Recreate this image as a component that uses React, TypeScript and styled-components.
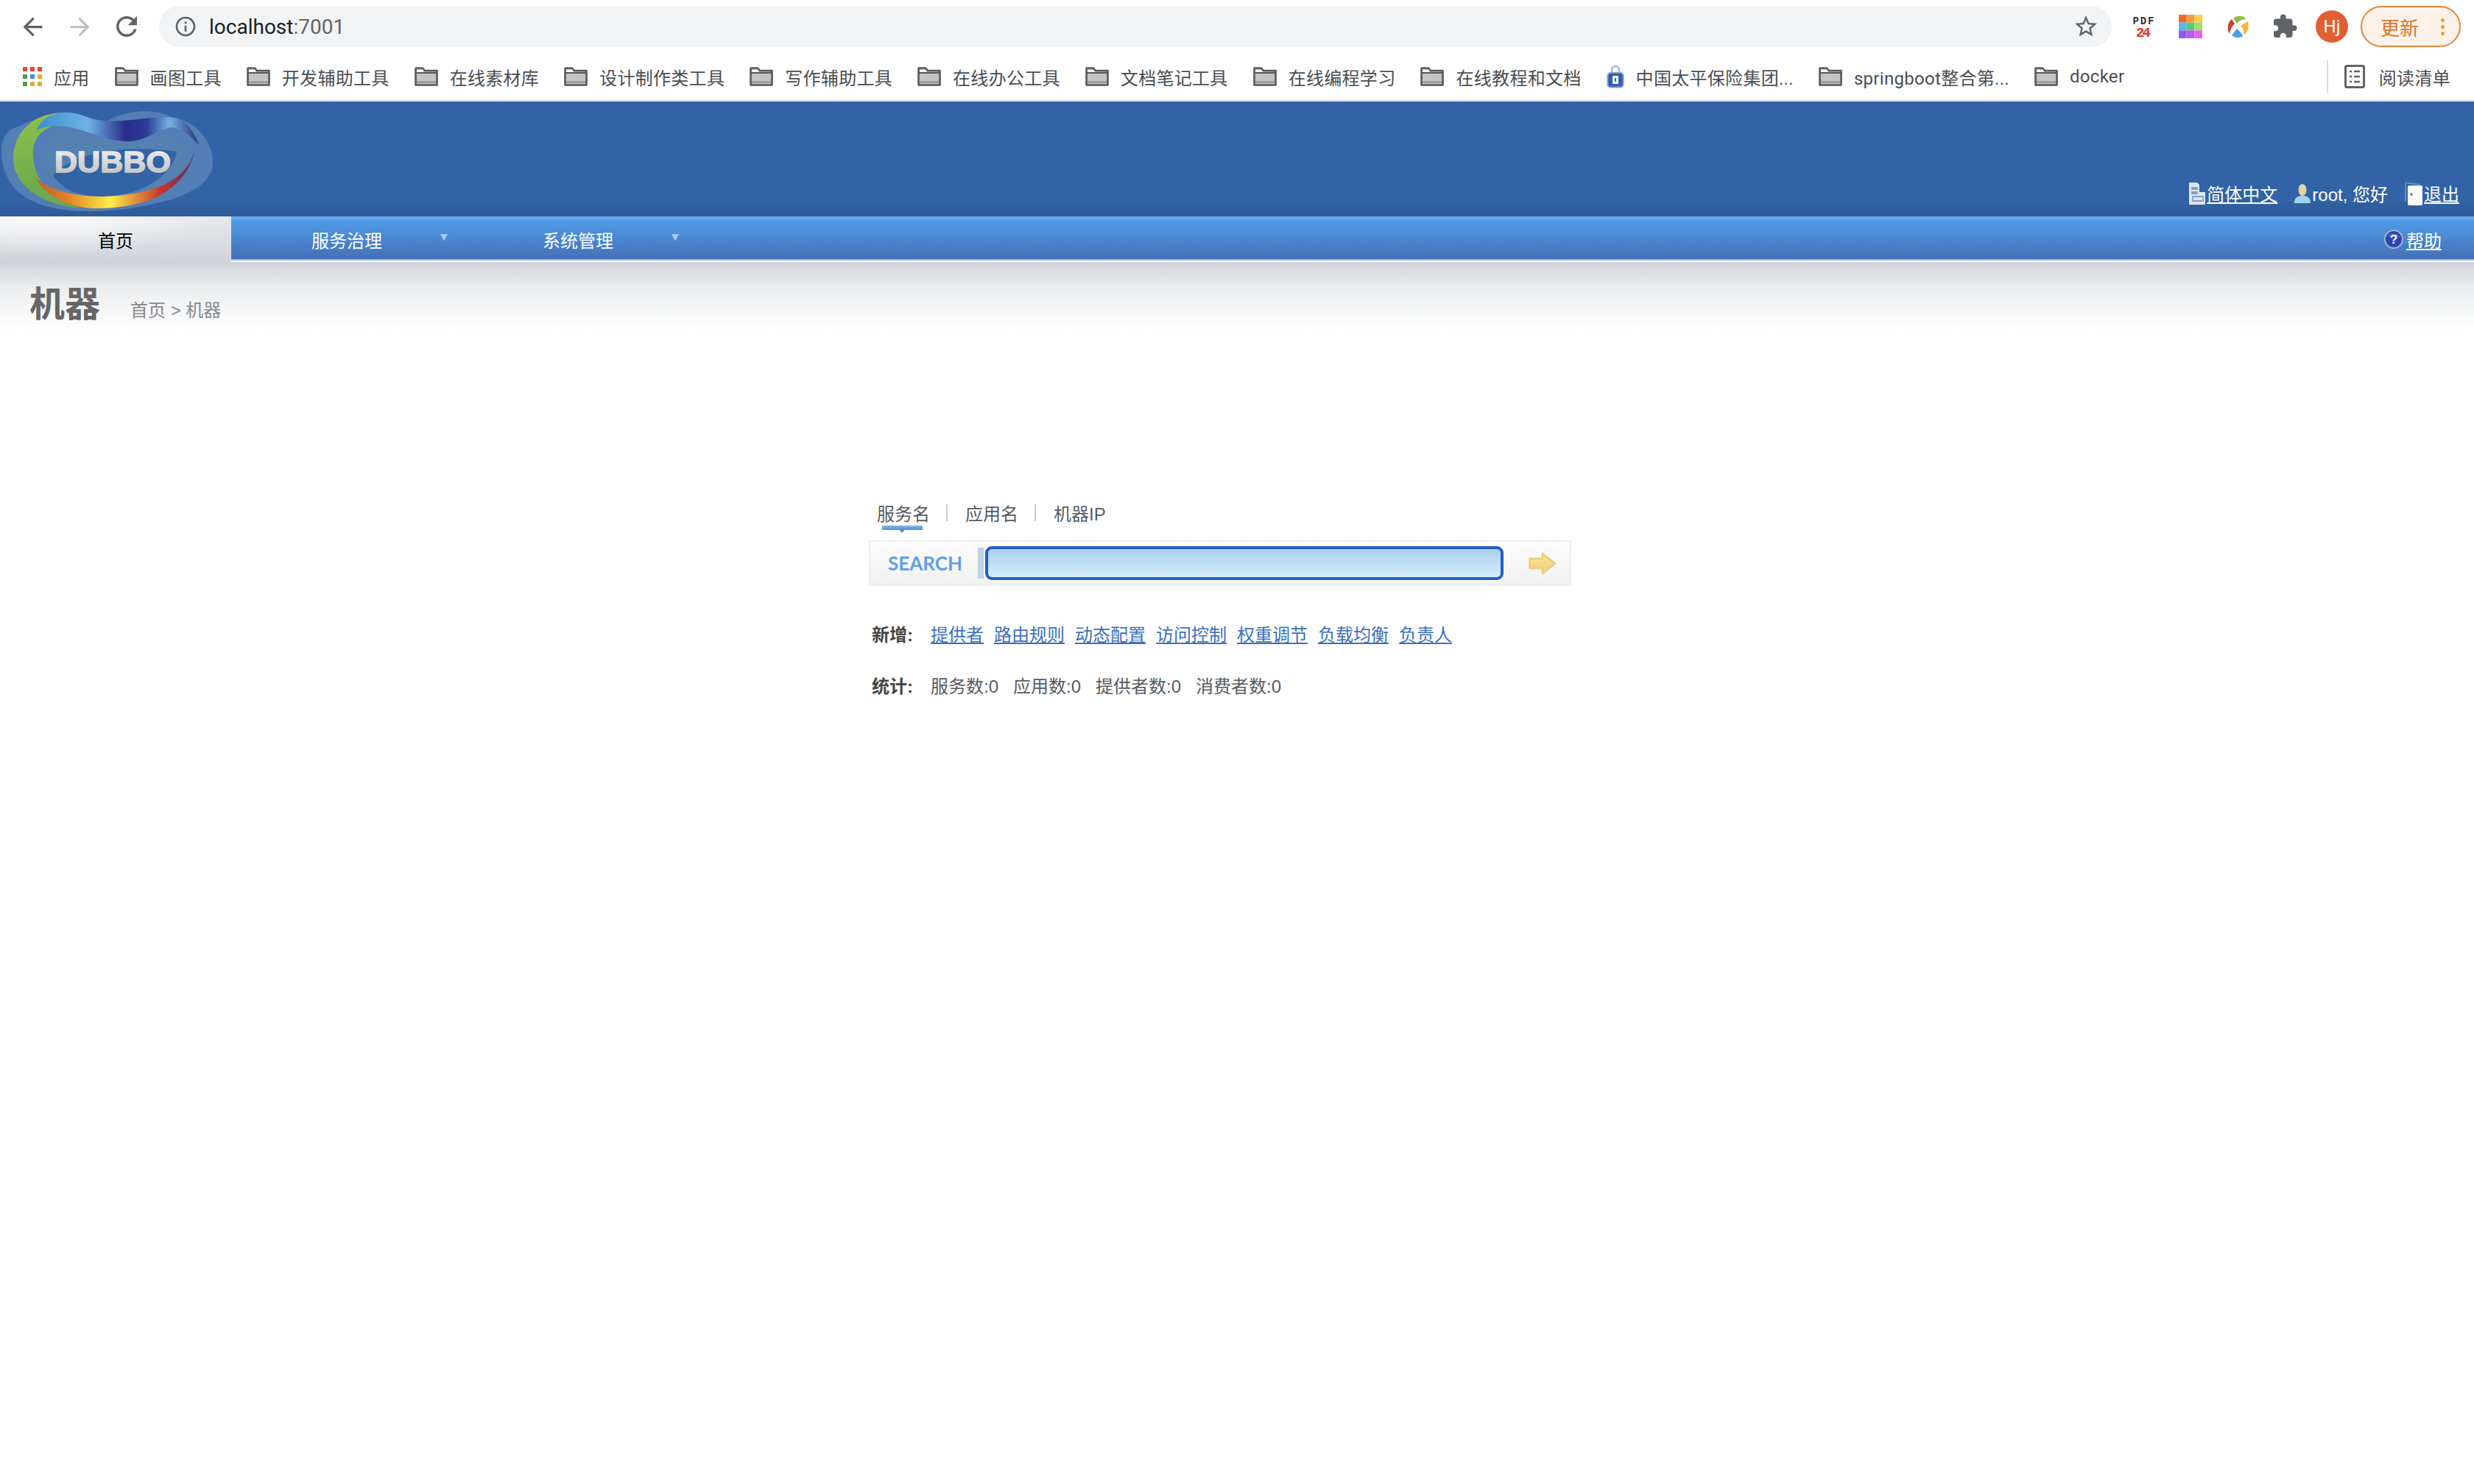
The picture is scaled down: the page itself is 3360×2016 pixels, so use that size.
import styled, { createGlobalStyle } from 'styled-components';
import {
    MdArrowBack,
    MdArrowForward,
    MdExtension,
    MdInfoOutline,
    MdRefresh,
    MdStarBorder,
} from 'react-icons/md';

const GlobalStyle = createGlobalStyle`
    html, body {
        margin: 0;
        padding: 0;
        background: #fff;
    }
    body {
        font-family: 'Liberation Sans', 'Noto Sans CJK SC', sans-serif;
        font-size: 24px;
    }
`;

const bookmarks = [
    '画图工具',
    '开发辅助工具',
    '在线素材库',
    '设计制作类工具',
    '写作辅助工具',
    '在线办公工具',
    '文档笔记工具',
    '在线编程学习',
    '在线教程和文档',
];

const addLinks = ['提供者', '路由规则', '动态配置', '访问控制', '权重调节', '负载均衡', '负责人'];
const stats = ['服务数:0', '应用数:0', '提供者数:0', '消费者数:0'];

const FolderIcon = () => (
    <svg width='32' height='26' viewBox='0 0 32 26'>
        <path
            d='M2 1.5h9l3 3.5h16.500v19.500H1.500V2z'
            fill='#c4c4c4'
            stroke='#55585c'
            strokeWidth='2.6'
            strokeLinejoin='round'
        />
        <path d='M1.500 8h29' stroke='#55585c' strokeWidth='2' />
        <path d='M3 5.500h9' stroke='#fff' strokeWidth='3' />
        <path d='M3 20.500h26' stroke='#8b8d90' strokeWidth='2' />
    </svg>
);

const AppsIcon = () => (
    <svg width='26' height='26' viewBox='0 0 26 26'>
        <rect x='0' y='0' width='6' height='6' fill='#e0453a' />
        <rect x='10' y='0' width='6' height='6' fill='#e0453a' />
        <rect x='20' y='0' width='6' height='6' fill='#e0453a' />
        <rect x='0' y='10' width='6' height='6' fill='#4d9a5b' />
        <rect x='10' y='10' width='6' height='6' fill='#4285f4' />
        <rect x='20' y='10' width='6' height='6' fill='#e8a93a' />
        <rect x='0' y='20' width='6' height='6' fill='#4d9a5b' />
        <rect x='10' y='20' width='6' height='6' fill='#e8a93a' />
        <rect x='20' y='20' width='6' height='6' fill='#e8a93a' />
    </svg>
);

const LockIcon = () => (
    <svg width='24' height='32' viewBox='0 0 24 32'>
        <path d='M7 12V7a5 5 0 0 1 10 0v5' fill='none' stroke='#a9b8d4' strokeWidth='2.500' />
        <rect x='1.500' y='11' width='21' height='19.500' rx='4' fill='#2f5fb0' stroke='#7f9bcc' strokeWidth='2' />
        <rect x='8' y='15' width='8' height='11' rx='1' fill='#fff' />
        <rect x='11' y='18' width='2' height='5' fill='#2f5fb0' />
    </svg>
);

const ReadingIcon = () => (
    <svg width='28' height='32' viewBox='0 0 28 32'>
        <rect x='1.500' y='1.500' width='25' height='29' rx='2' fill='none' stroke='#5f6368' strokeWidth='3' />
        <path d='M7 9h3M13 9h8M7 16h3M13 16h8M7 23h3M13 23h8' stroke='#5f6368' strokeWidth='2.500' />
    </svg>
);

const Pdf24Icon = () => (
    <svg width='30' height='30' viewBox='0 0 30 30'>
        <text x='15' y='12' textAnchor='middle' fontFamily='Liberation Mono, monospace' fontSize='14' fontWeight='700' fill='#333' textLength='29'>
            PDF
        </text>
        <text x='15' y='29' textAnchor='middle' fontFamily='Liberation Mono, monospace' fontSize='19' fontWeight='700' fill='#ee2a24' textLength='20'>
            24
        </text>
    </svg>
);

const PaletteIcon = () => (
    <svg width='32' height='32' viewBox='0 0 3 3'>
        <rect x='0' y='0' width='1' height='1' fill='#f2662e' />
        <rect x='1' y='0' width='1' height='1' fill='#f59b3c' />
        <rect x='2' y='0' width='1' height='1' fill='#fbd04a' />
        <rect x='0' y='1' width='1' height='1' fill='#54b8f2' />
        <rect x='1' y='1' width='1' height='1' fill='#5fcb70' />
        <rect x='2' y='1' width='1' height='1' fill='#98e06c' />
        <rect x='0' y='2' width='1' height='1' fill='#8d5af0' />
        <rect x='1' y='2' width='1' height='1' fill='#b75af0' />
        <rect x='2' y='2' width='1' height='1' fill='#ea62ea' />
    </svg>
);

const RingIcon = () => (
    <svg width='32' height='32' viewBox='0 0 32 32'>
        <path d='M8 6C2 11 1 20 5 26c1-6 3-10 7-14z' fill='#d23b2f' />
        <path d='M10 5c6-5 14-4 18 1-6 0-9 2-13 6z' fill='#8fbf3f' />
        <path d='M30 9c2 7 0 15-6 19 1-6-1-10-4-13z' fill='#f6b73c' />
        <path d='M8 28c5 4 11 4 15 1-2-5-5-7-8-10z' fill='#4a9fe8' />
    </svg>
);

const DubboLogo = () => (
    <LogoSvg width='290' height='142' viewBox='0 0 290 142'>
        <defs>
            <linearGradient id='ribbon' x1='0' x2='1' y1='0' y2='0'>
                <stop offset='0' stopColor='#3a8fce' />
                <stop offset='0.32' stopColor='#6fb2e3' />
                <stop offset='0.55' stopColor='#2a2c88' />
                <stop offset='0.68' stopColor='#2d3c96' />
                <stop offset='0.82' stopColor='#74b2e2' />
                <stop offset='1' stopColor='#27307e' />
            </linearGradient>
            <linearGradient id='band' x1='0' x2='1' y1='0' y2='0'>
                <stop offset='0' stopColor='#b8622e' />
                <stop offset='0.2' stopColor='#e07f24' />
                <stop offset='0.47' stopColor='#fcee48' />
                <stop offset='0.78' stopColor='#c9382a' />
                <stop offset='1' stopColor='#5a2a6e' />
            </linearGradient>
            <linearGradient id='green' x1='0' x2='0' y1='0' y2='1'>
                <stop offset='0' stopColor='#8fc04c' />
                <stop offset='1' stopColor='#66a650' />
            </linearGradient>
            <linearGradient id='silver' x1='0' x2='0' y1='0' y2='1'>
                <stop offset='0' stopColor='#f2f2f2' />
                <stop offset='1' stopColor='#bdbdbd' />
            </linearGradient>
        </defs>
        <path
            d='M2 60C2 36 14 28 28 25 60 4 105 14 135 24 160 8 200-4 235 14c34 4 55 36 54 62-1 34-49 52-119 62-60 7-120 4-150-28C8 95 2 80 2 60z'
            fill='#6f96c2'
            opacity='0.55'
        />
        <path
            d='M60 72C56 45 70 28 95 32c30 8 70 20 120 12 24-4 44 8 44 30 0 30-50 48-110 47C100 120 64 105 60 72z'
            fill='#5581b1'
        />
        <path
            d='M72 92C100 60 170 50 240 60c-6 34-50 60-100 61-34 0-56-10-68-29z'
            fill='#3163a5'
        />
        <path
            d='M84 7C42 8 17 38 18 70c0 32 34 62 90 67L80 120C60 110 47 96 45 66c-2-20 8-36 35-44z'
            fill='url(#green)'
        />
        <path
            d='M47 94c14 26 44 41 78 43 66 1 126-18 140-80-10 38-46 61-125 64-38 0-76-9-93-27z'
            fill='url(#band)'
        />
        <path
            d='M49 31C58 14 68 9 84 7c18-2 30 5 44 9 14 3 32 3 50 1 20-2 42-5 59-3 16 3 26 18 33 37-6-6-18-22-38-24-18 3-34 19-58 19-22 0-36-7-54-12-22-8-48-14-71-3z'
            fill='url(#ribbon)'
        />
        <text
            x='74'
            y='88'
            fontFamily='Liberation Sans, sans-serif'
            fontSize='40'
            fontWeight='700'
            fill='url(#silver)'
            stroke='url(#silver)'
            strokeWidth='1.500'
            textLength='158'
            lengthAdjust='spacingAndGlyphs'
        >
            DUBBO
        </text>
    </LogoSvg>
);

const DocIcon = () => (
    <svg width='22' height='30' viewBox='0 0 22 30'>
        <path d='M0 0h11l3 3v10h8v17H0z' fill='#dce6f2' />
        <path d='M4 7h7v2H4zM4 13h7v2H4zM5 19h14v6H5z' fill='none' stroke='#7f9fc6' strokeWidth='1.800' />
    </svg>
);

const UserIcon = () => (
    <svg width='22' height='28' viewBox='0 0 22 28'>
        <ellipse cx='11' cy='9' rx='5.500' ry='8' fill='#e6d3a0' />
        <path d='M0 27c0-8 5-10 11-10s11 2 11 10z' fill='#9fd4f0' />
    </svg>
);

const DoorIcon = () => (
    <svg width='24' height='34' viewBox='0 0 24 34'>
        <path d='M1 2l20 3' stroke='#5d8fd0' strokeWidth='2' fill='none' />
        <path d='M1 2v26' stroke='#5d8fd0' strokeWidth='2' fill='none' />
        <rect x='4' y='6' width='20' height='27' rx='2' fill='#fff' />
        <circle cx='9' cy='18' r='1.800' fill='#4a7fc0' />
    </svg>
);

const HelpIcon = () => (
    <svg width='26' height='26' viewBox='0 0 26 26'>
        <circle cx='13' cy='13' r='12' fill='#2c46b4' stroke='#a8b2c4' strokeWidth='2' />
        <path d='M5 10a9 8 0 0 1 16 0c-5-2-11-2-16 0z' fill='#5a78d8' />
        <text x='13' y='19' textAnchor='middle' fontFamily='Liberation Sans, sans-serif' fontSize='17' fontWeight='700' fill='#fff'>
            ?
        </text>
    </svg>
);

const GoArrow = () => (
    <svg width='38' height='31' viewBox='0 0 38 31'>
        <defs>
            <linearGradient id='go' x1='0' x2='0' y1='0' y2='1'>
                <stop offset='0' stopColor='#fbe48e' />
                <stop offset='1' stopColor='#f8c886' />
            </linearGradient>
        </defs>
        <path
            d='M1.500 9H19V2l17 13.500L19 29v-7H1.500z'
            fill='url(#go)'
            stroke='#e8cf78'
            strokeWidth='2.500'
            strokeLinejoin='round'
        />
    </svg>
);

const App = () => (
    <>
        <GlobalStyle />
        <BrowserBar>
            <NavButton><MdArrowBack size={39} color='#5f6368' /></NavButton>
            <NavButton><MdArrowForward size={39} color='#bdc1c6' /></NavButton>
            <NavButton><MdRefresh size={42} color='#5f6368' /></NavButton>
            <Omnibox>
                <MdInfoOutline size={32} color='#5f6368' />
                <Url>
                    localhost<UrlPort>:7001</UrlPort>
                </Url>
                <StarSlot><MdStarBorder size={36} color='#5f6368' /></StarSlot>
            </Omnibox>
            <ExtensionSlots>
                <NavButton><Pdf24Icon /></NavButton>
                <NavButton><PaletteIcon /></NavButton>
                <NavButton><RingIcon /></NavButton>
                <NavButton><MdExtension size={36} color='#5f6368' /></NavButton>
                <NavButton><Avatar>Hj</Avatar></NavButton>
            </ExtensionSlots>
            <UpdatePill>
                更新
                <UpdateDots>
                    <i />
                    <i />
                    <i />
                </UpdateDots>
            </UpdatePill>
        </BrowserBar>
        <BookmarkBar>
            <Bookmark><AppsIcon /><BookmarkLabel>应用</BookmarkLabel></Bookmark>
            {bookmarks.map((name) => (
                <Bookmark key={name}><FolderIcon /><BookmarkLabel>{name}</BookmarkLabel></Bookmark>
            ))}
            <Bookmark><LockIcon /><BookmarkLabel>中国太平保险集团...</BookmarkLabel></Bookmark>
            <Bookmark><FolderIcon /><BookmarkLabel>springboot整合第...</BookmarkLabel></Bookmark>
            <Bookmark><FolderIcon /><BookmarkLabel>docker</BookmarkLabel></Bookmark>
            <ReadingList>
                <ReadingIcon />
                <BookmarkLabel>阅读清单</BookmarkLabel>
            </ReadingList>
        </BookmarkBar>
        <SiteHeader>
            <DubboLogo />
            <UserLinks>
                <UserItem><DocIcon /><UserLink>简体中文</UserLink></UserItem>
                <UserItem><UserIcon /><span>root, 您好</span></UserItem>
                <UserItem><DoorIcon /><UserLink>退出</UserLink></UserItem>
            </UserLinks>
        </SiteHeader>
        <MainNav>
            <HomeTab>首页</HomeTab>
            <NavMenu>服务治理<MenuArrow /></NavMenu>
            <NavMenu>系统管理<MenuArrow /></NavMenu>
            <HelpLink><HelpIcon /><UserLink>帮助</UserLink></HelpLink>
        </MainNav>
        <TitleBand>
            <PageTitle>机器</PageTitle>
            <Breadcrumb>首页 &gt; 机器</Breadcrumb>
        </TitleBand>
        <SearchPanel>
            <SearchTabs>
                <SearchTab $active>服务名</SearchTab>
                <TabDivider />
                <SearchTab>应用名</SearchTab>
                <TabDivider />
                <SearchTab>机器IP</SearchTab>
            </SearchTabs>
            <SearchBox>
                <SearchLabel>SEARCH</SearchLabel>
                <InputEdge />
                <SearchInput />
                <GoButton><GoArrow /></GoButton>
            </SearchBox>
            <InfoRow $top={50}>
                <InfoLabel>新增:</InfoLabel>
                <InfoItems $gap={14}>
                    {addLinks.map((name) => (
                        <AddLink key={name}>{name}</AddLink>
                    ))}
                </InfoItems>
            </InfoRow>
            <InfoRow $top={42}>
                <InfoLabel>统计:</InfoLabel>
                <InfoItems $gap={20}>
                    {stats.map((item) => (
                        <span key={item}>{item}</span>
                    ))}
                </InfoItems>
            </InfoRow>
        </SearchPanel>
    </>
);

const BrowserBar = styled.div`
    display: flex;
    align-items: center;
    height: 72px;
    padding-left: 12px;
    box-sizing: border-box;
    background: #fff;
`;

const NavButton = styled.div`
    display: flex;
    align-items: center;
    justify-content: center;
    width: 64px;
    height: 64px;
    flex: none;
`;

const Omnibox = styled.div`
    display: flex;
    align-items: center;
    width: 2652px;
    height: 56px;
    margin-left: 12px;
    padding: 0 17px 0 20px;
    box-sizing: border-box;
    flex: none;
    border-radius: 28px;
    background: #f1f3f4;
`;

const Url = styled.span`
    margin-left: 16px;
    font-family: Roboto, sans-serif;
    font-size: 28px;
    color: #202124;
`;

const UrlPort = styled.span`
    color: #5f6368;
`;

const StarSlot = styled.span`
    display: flex;
    margin-left: auto;
`;

const ExtensionSlots = styled.div`
    display: flex;
    margin-left: 11px;
    flex: none;
`;

const Avatar = styled.div`
    display: flex;
    align-items: center;
    justify-content: center;
    width: 44px;
    height: 44px;
    border-radius: 50%;
    background: #e25f34;
    color: #fff;
    font-family: Roboto, sans-serif;
    font-size: 24px;
`;

const UpdatePill = styled.div`
    display: flex;
    align-items: center;
    width: 136px;
    height: 56px;
    margin-left: 7px;
    padding-left: 25px;
    box-sizing: border-box;
    flex: none;
    border: 2px solid #e0853a;
    border-radius: 28px;
    background: #fdf2ea;
    color: #d9762b;
    font-size: 26px;
`;

const UpdateDots = styled.span`
    display: flex;
    flex-direction: column;
    gap: 4px;
    margin-left: 30px;

    i {
        display: block;
        width: 5px;
        height: 5px;
        border-radius: 50%;
        background: #e8a035;
    }
`;

const BookmarkBar = styled.div`
    display: flex;
    align-items: center;
    gap: 34px;
    height: 66px;
    padding-left: 31px;
    box-sizing: border-box;
    border-bottom: 2px solid #d5dbe2;
    background: #fff;
`;

const Bookmark = styled.div`
    display: flex;
    align-items: center;
    gap: 16px;
    flex: none;
`;

const BookmarkLabel = styled.span`
    font-family: Roboto, 'Noto Sans CJK SC', sans-serif;
    font-size: 24px;
    letter-spacing: 0.3px;
    color: #4a4d52;
`;

const ReadingList = styled.div`
    display: flex;
    align-items: center;
    gap: 19px;
    height: 44px;
    margin-left: auto;
    margin-right: 32px;
    padding-left: 22px;
    border-left: 2px solid #d8dadd;
`;

const SiteHeader = styled.div`
    display: flex;
    justify-content: space-between;
    align-items: flex-end;
    height: 156px;
    box-sizing: border-box;
    background: linear-gradient(#3163a6 85%, #2e5a98);
    color: #fff;
`;

const LogoSvg = styled.svg`
    align-self: flex-start;
    margin-top: 8px;
    flex: none;
`;

const UserLinks = styled.div`
    display: flex;
    align-items: center;
    gap: 23px;
    padding: 0 20px 14px 0;
`;

const UserItem = styled.div`
    display: flex;
    align-items: center;
    gap: 2px;
    font-size: 24px;
    color: #fff;
`;

const UserLink = styled.span`
    text-decoration: underline;
`;

const MainNav = styled.div`
    display: flex;
    align-items: stretch;
    height: 60px;
    box-sizing: border-box;
    border-top: 4px solid #68aaf0;
    border-bottom: 2px solid #9dbde8;
    background: linear-gradient(#509ce9, #4470b7);
    box-shadow: 0 2px 0 #fff;
    position: relative;
    color: #fff;
`;

const HomeTab = styled.div`
    display: flex;
    align-items: center;
    justify-content: center;
    width: 314px;
    margin: -4px 0 -4px;
    flex: none;
    background: radial-gradient(ellipse 240px 50px at 20% 0, #fbfbfc, rgba(251, 251, 252, 0)),
        linear-gradient(#e6e8eb, #d0d4da);
    color: #000;
    font-size: 24px;
    z-index: 1;
`;

const NavMenu = styled.div`
    display: flex;
    align-items: center;
    width: 314px;
    padding-left: 109px;
    box-sizing: border-box;
    flex: none;
    font-size: 24px;
`;

const MenuArrow = styled.span`
    width: 0;
    height: 0;
    margin: -6px 0 0 79px;
    border-top: 9px solid #a9cbef;
    border-left: 5px solid transparent;
    border-right: 5px solid transparent;
`;

const HelpLink = styled.div`
    display: flex;
    align-items: center;
    gap: 4px;
    margin-left: auto;
    padding-right: 44px;
    font-size: 24px;
`;

const TitleBand = styled.div`
    display: flex;
    align-items: baseline;
    gap: 41px;
    height: 94px;
    margin-top: 2px;
    padding: 28px 0 0 40px;
    box-sizing: border-box;
    background: linear-gradient(#d0d4da, #eceef0 40%, #fff);
`;

const PageTitle = styled.h1`
    margin: 0;
    font-size: 48px;
    line-height: 60px;
    font-weight: 700;
    color: #666;
`;

const Breadcrumb = styled.span`
    font-size: 24px;
    color: #888;
`;

const SearchPanel = styled.div`
    width: 954px;
    margin: 232px 0 0 1180px;
`;

const SearchTabs = styled.div`
    display: flex;
    align-items: center;
    height: 28px;
    padding-left: 11px;
`;

const SearchTab = styled.div<{ $active?: boolean }>`
    position: relative;
    font-size: 24px;
    color: #555b62;

    ${(props) =>
        props.$active &&
        `
        &::after {
            content: '';
            position: absolute;
            left: 7px;
            right: 10px;
            top: 35px;
            height: 6px;
            background: linear-gradient(#7fb4ea, #4f8fdc);
        }
        &::before {
            content: '';
            position: absolute;
            left: 31px;
            top: 41px;
            border-top: 4px solid #4f7fb8;
            border-left: 3px solid transparent;
            border-right: 3px solid transparent;
        }
    `}
`;

const TabDivider = styled.span`
    width: 2px;
    height: 23px;
    margin: 0 24px 0 22px;
    background: #c8cbd0;
`;

const SearchBox = styled.div`
    display: flex;
    align-items: center;
    height: 62px;
    margin-top: 24px;
    padding-left: 24px;
    box-sizing: border-box;
    border: 2px solid #eceef1;
    background: linear-gradient(#fdfdfd, #f0f0f1);
`;

const SearchLabel = styled.span`
    width: 100px;
    margin-right: 22px;
    font-family: Lato, sans-serif;
    font-size: 26px;
    font-weight: 700;
    color: #5f9fe8;
    flex: none;
`;

const InputEdge = styled.span`
    width: 8px;
    height: 42px;
    background: #bcd4e6;
    flex: none;
`;

const SearchInput = styled.input`
    width: 704px;
    height: 46px;
    margin-left: 2px;
    box-sizing: border-box;
    border: 4px solid #205fc4;
    border-radius: 9px;
    outline: none;
    background: linear-gradient(#add0ef, #d1ecfb);
    box-shadow: 0 0 0 2px #fff;
    flex: none;
`;

const GoButton = styled.span`
    display: flex;
    margin-left: 34px;
`;

const InfoRow = styled.div<{ $top: number }>`
    display: flex;
    align-items: center;
    height: 28px;
    margin-top: ${(props) => props.$top}px;
    padding-left: 4px;
    font-size: 24px;
    color: #555b62;
`;

const InfoLabel = styled.b`
    width: 80px;
    flex: none;
    color: #444;
`;

const InfoItems = styled.div<{ $gap: number }>`
    display: flex;
    gap: ${(props) => props.$gap}px;
`;

const AddLink = styled.a`
    color: #3b70bd;
    text-decoration: underline;
`;

export default App;
